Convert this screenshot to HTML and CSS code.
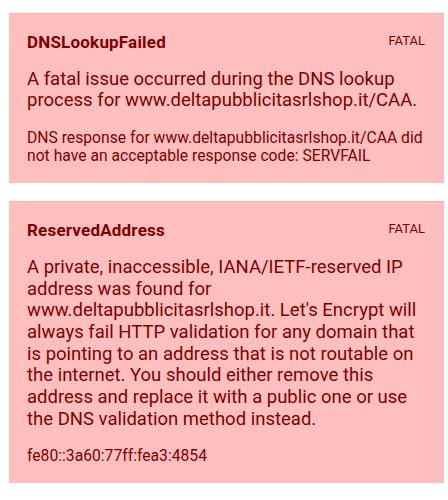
FILE: index.html
```html
<!DOCTYPE html>
<html>
<head>
<meta charset="utf-8">
<link rel="stylesheet" href="styles.css">
</head>
<body>
<div class="list">
  <div class="card">
    <div class="head">
      <div class="title">DNSLookupFailed</div>
      <div class="level">FATAL</div>
    </div>
    <div class="msg">A fatal issue occurred during the DNS lookup process for www.deltapubblicitasrlshop.it/CAA.</div>
    <div class="detail">DNS response for www.deltapubblicitasrlshop.it/CAA did not have an acceptable response code: SERVFAIL</div>
  </div>
  <div class="card">
    <div class="head">
      <div class="title">ReservedAddress</div>
      <div class="level">FATAL</div>
    </div>
    <div class="msg">A private, inaccessible, IANA/IETF-reserved IP address was found for www.deltapubblicitasrlshop.it. Let's Encrypt will always fail HTTP validation for any domain that is pointing to an address that is not routable on the internet. You should either remove this address and replace it with a public one or use the DNS validation method instead.</div>
    <div class="detail">fe80::3a60:77ff:fea3:4854</div>
  </div>
</div>
</body>
</html>
```
FILE: styles.css
```css
html, body {
  margin: 0;
  padding: 0;
  background: #ffffff;
}
body {
  font-family: Roboto, "Liberation Sans", sans-serif;
  color: #800000;
}
.list {
  display: flex;
  flex-direction: column;
  gap: 18px;
  padding: 13px 4px 0 9px;
}
.card {
  background: #ffbfbf;
  border-top: 1px solid #f7b0b0;
  padding: 19px 19px 18px 18px;
  display: flex;
  flex-direction: column;
  gap: 17px;
}
.head {
  display: flex;
  justify-content: space-between;
  align-items: flex-start;
}
.title {
  font-weight: 700;
  font-size: 17px;
  line-height: 18.75px;
  letter-spacing: 0.2px;
}
.level {
  font-size: 13px;
  line-height: 14.6px;
  padding-top: 1px;
}
.msg {
  font-size: 18.5px;
  line-height: 21.67px;
}
.detail {
  font-size: 15.7px;
  line-height: 18px;
}
```
